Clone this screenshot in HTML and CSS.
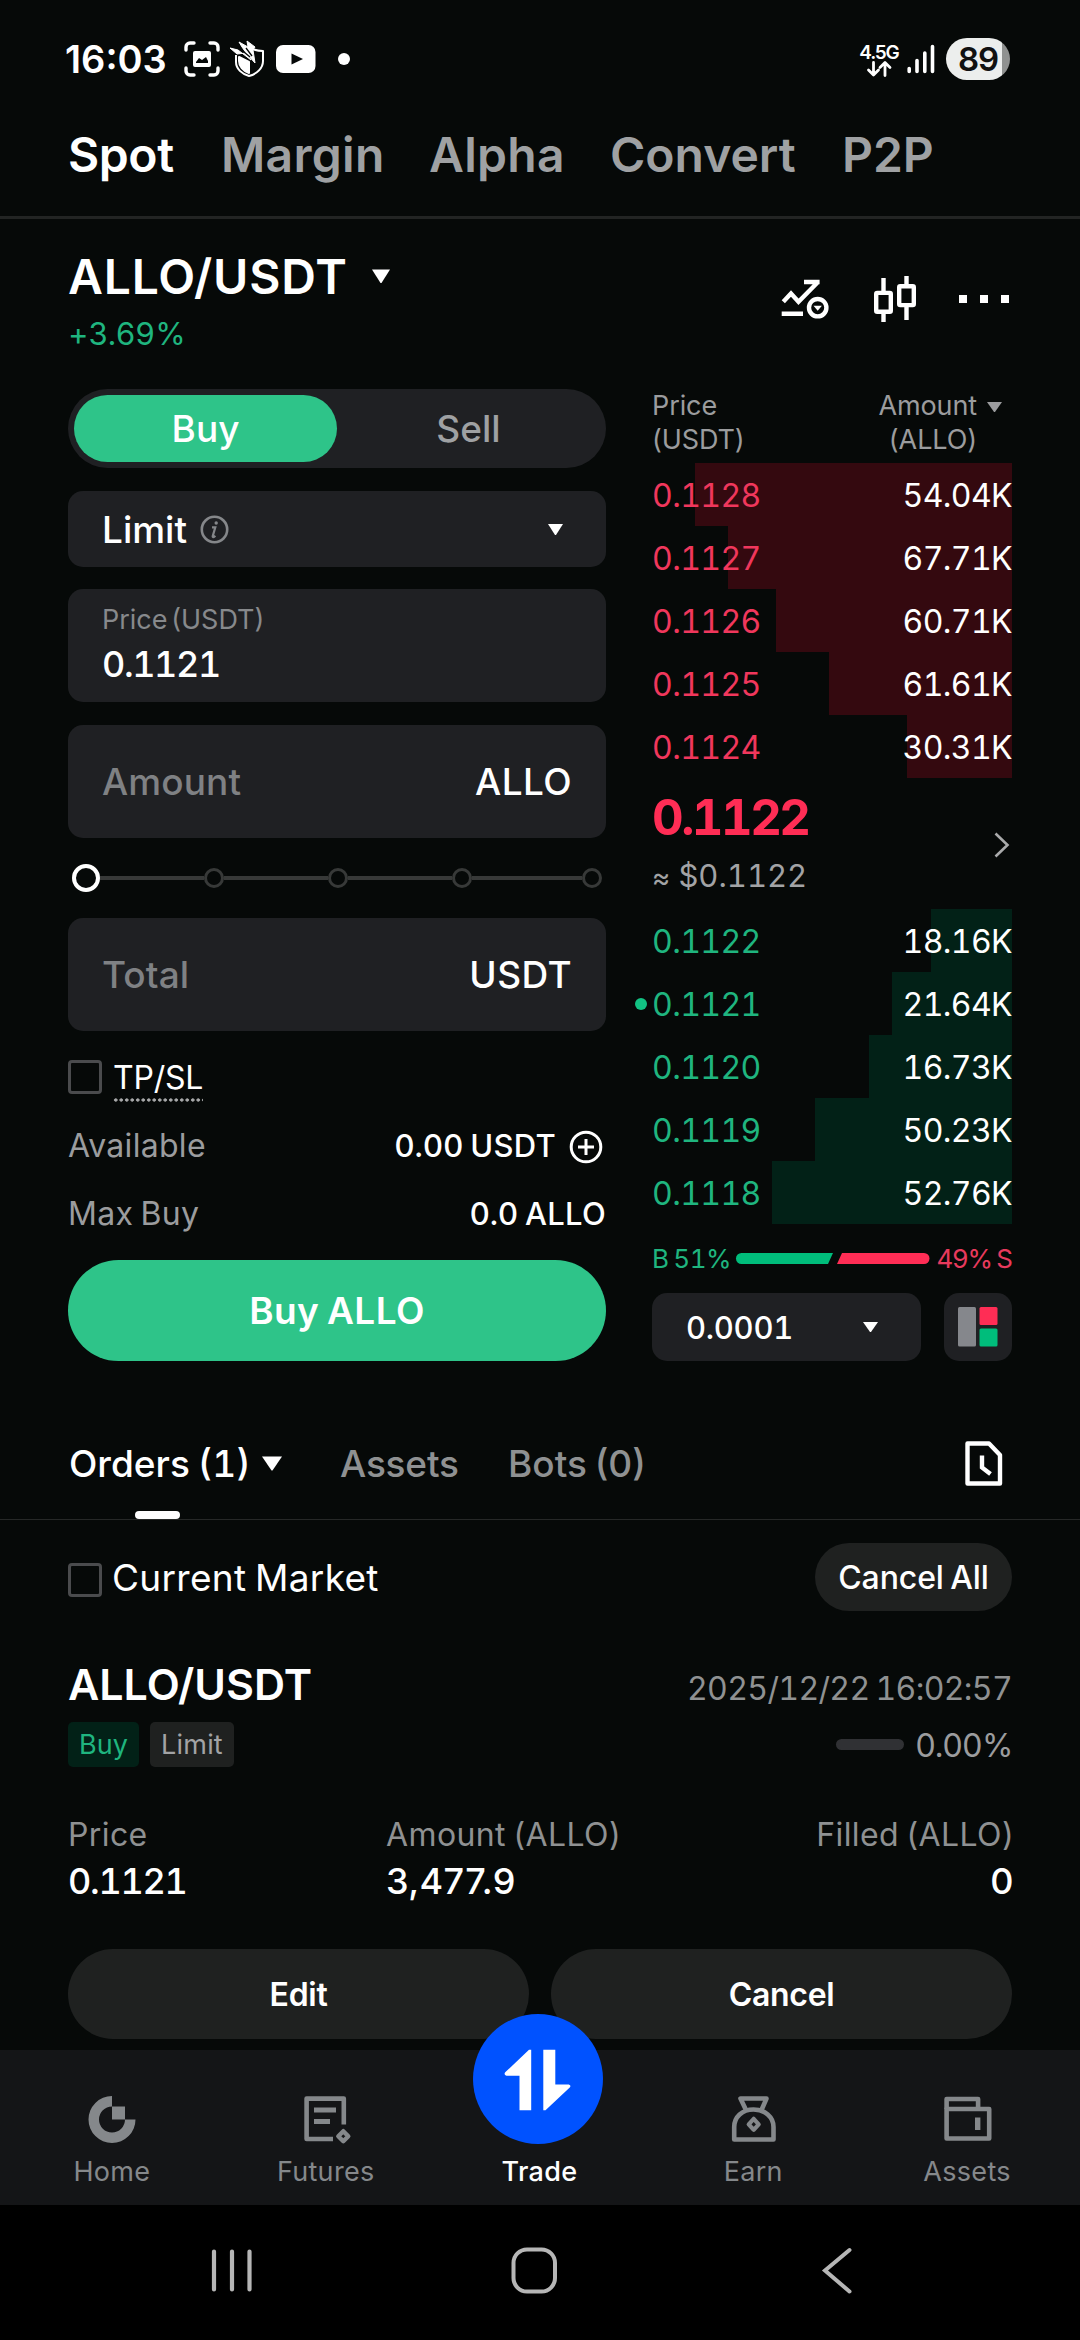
FILE: index.html
```html
<!DOCTYPE html>
<html lang="en">
<head>
<meta charset="utf-8">
<title>ALLO/USDT Spot</title>
<link rel="stylesheet" href="styles.css">
</head>
<body>
<div class="phone">

  <header class="status">
    <span class="clock">16:03</span>
    <svg class="st-shot" width="36" height="36" viewBox="0 0 36 36" fill="none" stroke="#fff" stroke-width="3.4" stroke-linecap="round" stroke-linejoin="round">
      <path d="M2 9V6a4 4 0 0 1 4-4h4M26 2h4a4 4 0 0 1 4 4v3M34 27v3a4 4 0 0 1-4 4h-4M10 34H6a4 4 0 0 1-4-4v-3"/>
      <rect x="9" y="10" width="18" height="16" rx="2" fill="#fff" stroke="none"/>
      <path d="M12 21l3-4 3 2 4-3 2 4v2H12z" fill="#060908" stroke="none"/>
    </svg>
    <svg class="st-shield" width="38" height="38" viewBox="0 0 38 38" fill="none" stroke="#fff" stroke-width="2" stroke-linejoin="round">
      <path d="M7 15v7c0 7 6 12 13 14 8-2 14-8 14-15V11c-5 0-9-1-13-3"/>
      <path d="M10 17l10 5v11c-6-2-10-7-10-12z" fill="#fff"/>
      <path d="M1 8l8 2 13 10-9-13-3-5 9 5-1-6 8 6-2 3 2 13-9-10L8 14z" fill="#fff" stroke-width="1"/>
      <path d="M9 7l12 10M17 8l6 8" stroke="#060908" stroke-width="1.3"/>
    </svg>
    <svg class="st-video" width="40" height="28" viewBox="0 0 40 28"><rect width="39.5" height="28" rx="7" fill="#fff"/><path d="M15.500 8.500l11.500 5.500-11.500 5.500z" fill="#060908"/></svg>
    <i class="st-dot"></i>
    <span class="st-net"><b>4.5G</b>
      <svg width="26" height="16" viewBox="0 0 26 16" fill="none" stroke="#fff" stroke-width="2.800" stroke-linecap="round" stroke-linejoin="round"><path d="M7.500 1.500v12M2.500 9l5 5 5-5M19 14.500v-12M14 6.500l5-5 5 5"/></svg>
    </span>
    <svg class="st-signal" width="28" height="30" viewBox="0 0 28 30" stroke="#fff" stroke-width="3.600" stroke-linecap="round"><path d="M2.200 24.500v3M10 16.500v11M17.800 9v18.500M25.500 2.500v25"/></svg>
    <span class="battery">89</span>
  </header>

  <nav class="markets">
    <a class="on m1">Spot</a><a class="m2">Margin</a><a class="m3">Alpha</a><a class="m4">Convert</a><a>P2P</a>
  </nav>

  <section class="pair">
    <div class="pair-name">
      <h1>ALLO/USDT <svg width="20" height="15" viewBox="0 0 20 15"><path d="M1 .5h18L10.500 14h-1z" fill="#fff"/></svg></h1>
      <p>+3.69%</p>
    </div>
    <div class="pair-tools">
      <svg width="50" height="46" viewBox="0 0 50 46" fill="none" stroke="#fff" stroke-width="4.400">
        <path d="M2.300 25.700L10 17.500l7.500 8.200L37 6M23 6h15.600M.7 37.700H22"/>
        <circle cx="36.700" cy="31.700" r="8.700"/><path d="M32.500 29.700h8.400l-4.200 5z" fill="#fff" stroke="none"/>
      </svg>
      <svg width="42" height="46" viewBox="0 0 42 46" fill="none" stroke="#fff" stroke-width="4.400">
        <rect x="2.200" y="16.900" width="14.600" height="18.900" rx="1"/><path d="M9.500 2v14M9.500 37v9"/>
        <rect x="25.200" y="10.200" width="14.600" height="18.900" rx="1"/><path d="M32.500 0v9M32.500 30v14"/>
      </svg>
      <svg width="50" height="8" viewBox="0 0 50 8" fill="#fff"><path d="M0 0h8v8H0zM21 0h8v8h-8zM42 0h8v8h-8z"/></svg>
    </div>
  </section>

  <main class="trade">
    <section class="form">
      <div class="side"><button class="buy">Buy</button><button>Sell</button></div>

      <div class="box limit">
        <span>Limit</span>
        <svg width="29" height="29" viewBox="0 0 29 29" fill="none" stroke="#85878a" stroke-width="2.600"><circle cx="14.500" cy="14.500" r="12.700"/><path d="M12 12.300h3.300l-2.600 9c-.2 1 1 1.200 2.600-.6" stroke-width="2.200"/><circle cx="16.200" cy="8" r="1.700" fill="#85878a" stroke="none"/></svg>
        <svg class="end" width="15" height="11" viewBox="0 0 15 11"><path d="M0 0h15L8 11H7z" fill="#fff"/></svg>
      </div>

      <label class="box price"><small>Price (USDT)</small><b class="num">0.1121</b></label>
      <div class="box field"><span>Amount</span><b>ALLO</b></div>
      <div class="slider"><i class="knob"></i><u></u><i></i><u></u><i></i><u></u><i></i><u class="tail"></u><i></i></div>
      <div class="box field"><span>Total</span><b>USDT</b></div>

      <div class="line first"><i class="check"></i><span class="tpsl">TP/SL</span></div>
      <div class="line"><span class="key">Available</span><span class="val">0.00 USDT</span>
        <svg class="plus" width="34" height="34" viewBox="0 0 34 34" fill="none" stroke="#fff" stroke-width="3"><circle cx="17" cy="17" r="14.800"/><path d="M17 9v16M9 17h16"/></svg>
      </div>
      <div class="line"><span class="key">Max Buy</span><span class="val">0.0 ALLO</span></div>
      <button class="submit">Buy ALLO</button>
    </section>

    <section class="book">
      <div class="book-head">
        <p>Price<br>(USDT)</p>
        <p class="amt">Amount<br>(ALLO)</p>
        <svg width="15" height="10" viewBox="0 0 15 10"><path d="M0 0h15L8 10H7z" fill="#9b9c9e"/></svg>
      </div>
      <ol class="rows asks num">
        <li><i style="width:317px"></i><span>0.1128</span><b>54.04K</b></li>
        <li><i style="width:284px"></i><span>0.1127</span><b>67.71K</b></li>
        <li><i style="width:236px"></i><span>0.1126</span><b>60.71K</b></li>
        <li><i style="width:183px"></i><span>0.1125</span><b>61.61K</b></li>
        <li><i style="width:105px"></i><span>0.1124</span><b>30.31K</b></li>
      </ol>
      <div class="last">
        <div><strong class="num">0.1122</strong><p class="num"><em>≈</em> $0.1122</p></div>
        <svg width="16" height="26" viewBox="0 0 16 26" fill="none" stroke="#a9aaab" stroke-width="2.600"><path d="M1.500 1.500L13.500 13l-12 11.500"/></svg>
      </div>
      <ol class="rows bids num">
        <li><i style="width:81px"></i><span>0.1122</span><b>18.16K</b></li>
        <li class="mine"><i style="width:120px"></i><span>0.1121</span><b>21.64K</b></li>
        <li><i style="width:143px"></i><span>0.1120</span><b>16.73K</b></li>
        <li><i style="width:197px"></i><span>0.1119</span><b>50.23K</b></li>
        <li><i style="width:240px"></i><span>0.1118</span><b>52.76K</b></li>
      </ol>
      <div class="ratio">
        <span class="b num">B 51%</span>
        <svg width="194" height="11" viewBox="0 0 194 11"><path d="M5.500 0H97l-5 11H5.500a5.500 5.500 0 0 1 0-11z" fill="#00bd7b"/><path d="M106 0h82a5.500 5.500 0 0 1 0 11h-87z" fill="#ff2d55"/></svg>
        <span class="s">49% S</span>
      </div>
      <div class="depth">
        <div class="step num">0.0001<svg width="15" height="10" viewBox="0 0 15 10"><path d="M0 0h15L8 10H7z" fill="#fff"/></svg></div>
        <div class="view"><svg width="40" height="40" viewBox="0 0 40 40"><rect x="0" y="0" width="18" height="39.500" rx="1.500" fill="#85878c"/><rect x="21.500" y="0" width="18" height="18" rx="1.500" fill="#ff2d55"/><rect x="21.500" y="21.500" width="18" height="18" rx="1.500" fill="#00bd7b"/></svg></div>
      </div>
    </section>
  </main>

  <nav class="tabs">
    <a class="on"><span class="num">Orders (1)</span> <svg width="20" height="15" viewBox="0 0 20 15"><path d="M0 .5h20L10.500 14.500h-1z" fill="#fff"/></svg></a>
    <a class="t2">Assets</a><a class="t3">Bots (0)</a>
    <svg class="end" width="38" height="45" viewBox="0 0 38 45" fill="none" stroke="#fff" stroke-width="4.400"><path d="M2.500 2.500h21.500l11 11.500v28.500h-32.500z" stroke-linejoin="round"/><path d="M17 14.500v12l8.500 6.500"/></svg>
  </nav>

  <section class="orders">
    <div class="filter"><i class="check"></i><span>Current Market</span><button>Cancel All</button></div>

    <article>
      <div class="order-top"><h2>ALLO/USDT</h2><time class="num">2025/12/22 16:02:57</time></div>
      <div class="order-tags"><span class="tag green">Buy</span><span class="tag type">Limit</span><i></i><span class="pct">0.00%</span></div>
      <dl>
        <div><dt>Price</dt><dd class="num w1">0.1121</dd></div>
        <div><dt>Amount (ALLO)</dt><dd>3,477.9</dd></div>
        <div><dt>Filled (ALLO)</dt><dd>0</dd></div>
      </dl>
      <div class="actions"><button>Edit</button><button>Cancel</button></div>
    </article>
  </section>

  <nav class="dock">
    <a><svg width="48" height="48" viewBox="0 0 48 48" fill="#85888b"><path d="M24 0A23.500 23.500 0 1 0 47.500 23.500H37A13 13 0 1 1 24 10.500z"/><path d="M24 10.500h13v13H24z"/></svg>Home</a>
    <a><svg width="48" height="48" viewBox="0 0 48 48" fill="none" stroke="#85888b" stroke-width="4.600" stroke-linejoin="round"><path d="M31 43H4.600V2.600h37.200v26"/><path d="M12 14h22M12 25.500h16" stroke-width="5"/><path d="M41.300 35.200l5 5-5 5-5-5z" stroke-width="4.400"/></svg>Futures</a>
    <a class="on"><span class="fab"><svg width="130" height="130" viewBox="0 0 130 130" fill="#fff"><path d="M56 35.800h2.200v60.400H46.500V61.800H33.500q-3-1-1.300-3.500zM70.300 35.800h12v34.700h13.500q2.500.8 1.200 2.800L72.500 96.200h-2.200z"/></svg></span>Trade</a>
    <a><svg width="48" height="48" viewBox="0 0 48 48" fill="none" stroke="#85888b" stroke-width="4.600" stroke-linejoin="round"><path d="M17 14l-5.500-11.500h26L32.500 14"/><path d="M5.200 43.500V31c0-10 8-17.500 19.300-17.500S44.500 21 44.500 31v12.500z"/><path d="M24.700 22.800l5 5.500-5 5.500-5-5.500z" stroke-width="4.200"/></svg>Earn</a>
    <a><svg width="48" height="48" viewBox="0 0 48 48" fill="none" stroke="#85888b" stroke-width="4.600" stroke-linejoin="round"><path d="M3.600 13V3h31.500v10"/><path d="M3.600 13h42.600v29.500H3.600z"/><path d="M34.700 21.500v12.500" stroke-width="5.400"/></svg>Assets</a>
  </nav>

  <footer class="system">
    <svg width="48" height="48" viewBox="0 0 48 48" stroke="#b6b6b6" stroke-width="4.200" stroke-linecap="round"><path d="M6 4.500v38M24 4.500v38M41.500 4.500v38"/></svg>
    <svg width="48" height="48" viewBox="0 0 48 48" fill="none" stroke="#b6b6b6" stroke-width="4"><rect x="3.500" y="2.500" width="41.500" height="42" rx="13.500"/></svg>
    <svg width="48" height="48" viewBox="0 0 48 48" fill="none" stroke="#b6b6b6" stroke-width="4" stroke-linecap="round"><path d="M37.500 3L13 23.500 37.500 44.500"/></svg>
  </footer>
</div>
</body>
</html>
```
FILE: styles.css
```css
* { box-sizing: border-box; margin: 0; padding: 0; }
body { background: #060908; color: #fff; font-family: Inter, sans-serif; }
svg { display: block; flex: none; overflow: visible; }
button { border: 0; background: none; color: inherit; font: inherit; word-spacing: inherit; }
ol { list-style: none; }
i, em { font-style: normal; }
.num { font-feature-settings: "tnum"; }
.phone { width: 1080px; height: 2340px; overflow: hidden; display: flex; flex-direction: column; word-spacing: -2px; }

/* status bar */
.status { height: 93px; padding: 25px 70px 0 65px; display: flex; align-items: center; flex: none; }
.clock { width: 119px; font-size: 38px; font-weight: 600; line-height: 68px; }
.st-shield { margin-left: 9px; }
.st-video { margin-left: 9px; }
.st-dot { width: 12px; height: 12px; border-radius: 50%; background: #fff; margin-left: 22px; }
.st-net { margin-left: auto; width: 38px; padding-top: 2px; display: flex; flex-direction: column; align-items: center; }
.st-net b { font-size: 19px; line-height: 17px; font-weight: 600; letter-spacing: -1.200px; }
.st-signal { margin-left: 9px; }
.battery { width: 64px; height: 42px; margin-left: 11px; border-radius: 21px; background: linear-gradient(90deg, #eceeed 56px, #8f9190 56px); color: #111; font-size: 33px; font-weight: 600; line-height: 42px; text-align: center; letter-spacing: -1px; }

/* market switcher */
.markets { height: 126px; border-bottom: 3px solid #222423; padding: 0 68px; display: flex; align-items: center; flex: none; font-size: 48px; font-weight: 600; color: #9fa1a3; }
.markets .on { color: #fff; }
.markets .m1 { width: 153px; letter-spacing: -.4px; }
.markets .m2 { width: 208px; letter-spacing: .3px; }
.markets .m3 { width: 181px; letter-spacing: .3px; }
.markets .m4 { width: 232px; }

/* pair header */
.pair { height: 170px; padding: 27px 71px 0 68px; display: flex; justify-content: space-between; flex: none; }
.pair h1 { display: flex; align-items: center; gap: 23px; font-size: 48px; font-weight: 600; line-height: 61px; letter-spacing: .8px; }
.pair p { margin-top: 7px; font-size: 31px; line-height: 40px; color: #1fb57f; letter-spacing: .4px; }
.pair-tools { display: flex; align-items: center; height: 106px; gap: 43px; }
.pair-tools svg:last-child { margin-top: -1px; }

/* order form */
.trade { display: grid; grid-template-columns: 538px 360px; gap: 46px; padding: 0 68px; height: 972px; flex: none; }
.form { font-size: 37px; font-weight: 500; }
.side { height: 79px; border-radius: 40px; background: #1f2023; padding: 6px; display: flex; }
.side button { flex: 1; border-radius: 34px; color: #9fa1a3; }
.side .buy { background: #2ec489; color: #fff; }
.box { border-radius: 15px; background: #1f2023; padding: 0 35px 0 34px; display: flex; align-items: center; }
.limit { height: 76px; margin: 23px 0 22px; gap: 13px; }
.end { margin-left: auto; }
.limit .end { margin-right: 8px; }
.price { height: 113px; margin-bottom: 23px; padding-top: 14px; flex-direction: column; align-items: flex-start; }
.price small { font-size: 27px; font-weight: 400; line-height: 34px; color: #87898c; word-spacing: -4px; }
.price b { font-size: 36px; font-weight: 500; line-height: 54px; letter-spacing: -1.400px; }
.field { height: 113px; justify-content: space-between; letter-spacing: .1px; }
.field span { color: #7f8184; }
.field b { font-weight: 500; letter-spacing: .4px; margin-right: -1px; }
.slider { height: 80px; padding: 0 4px; display: flex; align-items: center; }
.slider i { width: 20px; height: 20px; border: 3px solid #373938; border-radius: 50%; flex: none; }
.slider .knob { width: 28px; height: 28px; border: 4px solid #fff; }
.slider u { flex: 104; height: 4px; background: #373938; }
.slider .tail { flex: 110; }
.line { height: 68px; display: flex; align-items: center; font-size: 32px; }
.line.first { margin-top: 12px; }
.check { width: 34px; height: 34px; border: 3px solid #4a4b4d; border-radius: 4px; flex: none; }
.tpsl { margin: 3px 0 0 11px; font-weight: 400; line-height: 46px; height: 47px; letter-spacing: -.2px; background: radial-gradient(circle, #a9aaab 1.400px, transparent 1.900px) 0 100% / 5.500px 4px repeat-x; }
.key { color: #9b9c9e; font-weight: 400; letter-spacing: .3px; margin-right: auto; }
.val { font-size: 31px; letter-spacing: .3px; }
.plus { margin: 3px 3px 0 13px; }
.submit { width: 100%; height: 101px; margin-top: 13px; border-radius: 51px; background: #2ec489; font-weight: 600; letter-spacing: .4px; }

/* order book */
.book-head { height: 74px; display: flex; font-size: 27px; line-height: 34px; color: #9b9c9e; letter-spacing: -.1px; }
.book-head .amt { margin-left: auto; text-align: right; }
.book-head svg { margin: 13px 10px 0 10px; }
.rows li { position: relative; height: 63px; display: flex; justify-content: space-between; align-items: center; font-size: 32px; letter-spacing: -.6px; }
.rows i { position: absolute; right: 0; top: 0; bottom: 0; }
.rows span, .rows b { position: relative; top: 1px; font-weight: 400; }
.asks i { background: #34090f; }
.bids i { background: #022117; }
.asks span { color: #f0375c; }
.bids span { color: #1fb57f; }
.mine::before { content: ""; position: absolute; left: -17px; top: 26px; width: 12px; height: 12px; border-radius: 50%; background: #12c283; }
.last { height: 131px; padding: 10px 2px 0 0; display: flex; justify-content: space-between; }
.last strong { display: block; font-size: 49px; font-weight: 700; line-height: 60px; color: #ff2d55; letter-spacing: -2.500px; }
.last p { margin-top: 7px; font-size: 31px; line-height: 41px; color: #a2a3a5; word-spacing: 0; }
.last em { font-size: 28px; }
.last svg { margin-top: 44px; }
.ratio { height: 69px; display: flex; align-items: center; font-size: 26px; }
.ratio svg { margin: 0 auto 0 7px; }
.ratio .b { width: 77px; color: #1fb57f; letter-spacing: -.4px; white-space: nowrap; }
.ratio .s { color: #e83a5d; letter-spacing: -1px; }
.depth { display: flex; justify-content: space-between; }
.step { width: 269px; height: 68px; border-radius: 15px; background: #1f2023; padding: 0 43px 0 34px; display: flex; align-items: center; justify-content: space-between; font-size: 31px; font-weight: 500; letter-spacing: -.3px; }
.view { width: 68px; height: 68px; border-radius: 15px; background: #1f2023; display: grid; place-items: center; }

/* orders tabs */
.tabs { height: 112px; margin-top: 47px; border-bottom: 1px solid #262827; padding: 0 77px 0 69px; display: flex; align-items: center; flex: none; font-size: 37px; font-weight: 500; color: #8f9192; }
.tabs .on { position: relative; height: 111px; width: 271px; display: flex; align-items: center; gap: 11px; color: #fff; }
.tabs .on::after { content: ""; position: absolute; left: 66px; bottom: 0; width: 45px; height: 8px; border-radius: 4px; background: #fff; }
.tabs .t2 { width: 168px; letter-spacing: -.2px; }

/* open order */
.orders { padding: 23px 68px 0; flex: none; height: 530px; }
.filter { height: 68px; display: flex; align-items: center; font-size: 37px; font-weight: 500; }
.filter .check { margin-top: 5px; }
.filter span { margin: 0 auto 0 10px; font-weight: 400; letter-spacing: .3px; }
.filter button { width: 197px; height: 68px; border-radius: 34px; background: #1f2120; font-size: 32px; letter-spacing: -.1px; }
.order-top { margin-top: 43px; height: 60px; display: flex; align-items: baseline; justify-content: space-between; }
.order-top h2 { font-size: 43px; font-weight: 600; line-height: 60px; }
.order-top time { font-size: 32px; color: #8f9192; letter-spacing: -.650px; }
.order-tags { margin-top: 8px; height: 45px; display: flex; align-items: center; }
.tag { width: 71px; height: 45px; border-radius: 5px; background: #1f2120; text-align: center; font-size: 27px; line-height: 46px; color: #a2a3a5; }
.tag.type { width: 84px; margin-left: 11px; letter-spacing: .2px; }
.tag.green { background: #022117; color: #1fb57f; }
.order-tags i { margin-left: auto; width: 68px; height: 11px; border-radius: 6px; background: #303134; }
.pct { margin: 1px -1px 0 11px; font-size: 32px; color: #9b9c9e; letter-spacing: -.4px; }
dl { margin-top: 44px; display: grid; grid-template-columns: 318px 1fr auto; }
dt { font-size: 32px; line-height: 47px; color: #8f9192; letter-spacing: .4px; }
dd { font-size: 36px; font-weight: 500; line-height: 47px; letter-spacing: .4px; }
dd.w1 { letter-spacing: -1.300px; }
dl div:last-child { text-align: right; margin-right: -2px; }
.actions { margin-top: 44px; display: flex; gap: 22px; }
.actions button { flex: 1; height: 90px; border-radius: 45px; background: #1f2120; font-size: 32px; font-weight: 600; letter-spacing: -.3px; }

/* app navigation */
.dock { height: 155px; background: #141517; padding: 0 6px 0 5px; display: flex; flex: none; }
.dock a { position: relative; flex: 1; padding-top: 46px; display: flex; flex-direction: column; align-items: center; gap: 11px; font-size: 27px; line-height: 34px; color: #85888b; letter-spacing: .3px; }
.dock .on { color: #fff; font-weight: 500; padding-top: 105px; }
.fab { position: absolute; top: -36px; left: 50%; width: 130px; height: 130px; margin-left: -66px; border-radius: 50%; background: #0052ff; }

/* system navigation */
.system { height: 135px; background: #000; padding: 42px 0 0 208px; display: flex; align-items: flex-start; gap: 254px; flex: none; }
```
